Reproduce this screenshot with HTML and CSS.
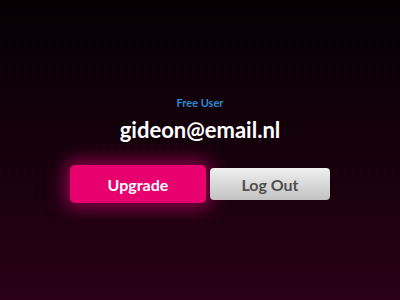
FILE: index.html
```html
<!DOCTYPE html>
<html lang="en">
<head>
    <meta charset="UTF-8">
    <meta name="viewport" content="width=device-width, initial-scale=1.0">
    <title>Account</title>
    <link rel="stylesheet" href="styles.css">
</head>
<body>
<div class="screen">
    <div class="account">
        <div class="plan">Free User</div>
        <div class="email">gideon@email.nl</div>
        <div class="actions">
            <button class="btn btn-upgrade">Upgrade</button>
            <button class="btn btn-logout">Log Out</button>
        </div>
    </div>
</div>
</body>
</html>
```
FILE: styles.css
```css
html, body {
    margin: 0;
    padding: 0;
}
body {
    font-family: Lato, "Open Sans", sans-serif;
    background: #050003;
}
.screen {
    width: 400px;
    height: 300px;
    display: flex;
    justify-content: center;
    background-color: #0a0006;
    background-image:
        linear-gradient(rgba(255,0,120,0.018) 1px, transparent 1px),
        linear-gradient(90deg, rgba(255,0,120,0.018) 1px, transparent 1px),
        linear-gradient(to bottom, #040002 0%, #12000a 45%, #290018 100%);
    background-size: 8px 8px, 8px 8px, 100% 100%;
}
.account {
    display: flex;
    flex-direction: column;
    align-items: center;
    padding-top: 95px;
}
.plan {
    color: #2b8bd3;
    font-size: 11px;
    font-weight: bold;
    line-height: 16px;
}
.email {
    color: #fff;
    font-size: 22px;
    font-weight: bold;
    line-height: 30px;
    margin-top: 4px;
}
.actions {
    display: flex;
    align-items: center;
    gap: 4px;
    margin-top: 20px;
}
.btn {
    border: none;
    font-family: inherit;
    font-weight: bold;
    cursor: pointer;
    padding: 0;
}
.btn-upgrade {
    width: 136px;
    height: 38px;
    border-radius: 5px;
    background: #e8006f;
    color: #fff;
    font-size: 16px;
    box-shadow: 0 0 18px 5px rgba(255,0,130,0.5);
}
.btn-logout {
    width: 120px;
    height: 32px;
    border-radius: 4px;
    background: linear-gradient(to bottom, #f0f0f0, #c2c2c2);
    color: #4f4f4f;
    font-size: 16px;
}
```
